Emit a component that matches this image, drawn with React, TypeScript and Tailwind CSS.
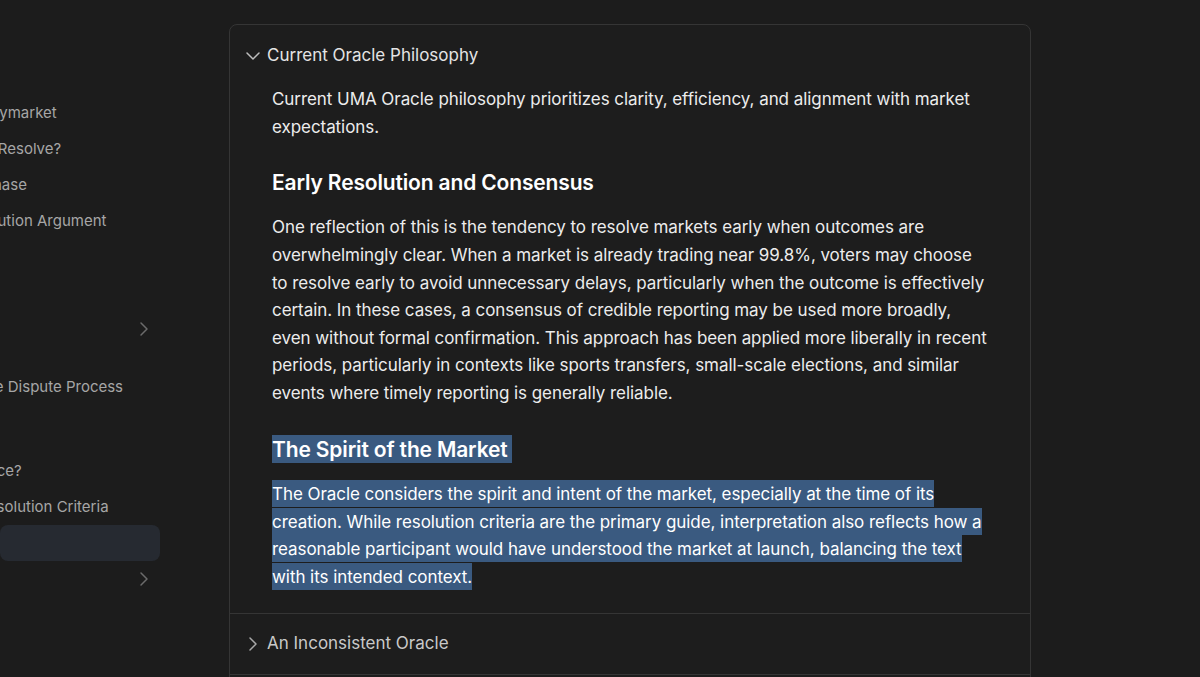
import React from "react";
import { ChevronDown, ChevronRight } from "lucide-react";

type NavItem = {
  label: string;
  shift: string;
  chevron?: boolean;
  active?: boolean;
  gap?: string;
};

const nav: NavItem[] = [
  { label: "Trading on Polymarket", shift: "-ml-[103px]" },
  { label: "How Do Markets Resolve?", shift: "-ml-[124px]" },
  { label: "Proposal Phase", shift: "-ml-[83px]" },
  { label: "Making a Resolution Argument", shift: "-ml-[110px]" },
  { label: "Guides", shift: "-ml-[50px]", chevron: true, gap: "mt-[72px]" },
  { label: "Navigating the Dispute Process", shift: "-ml-[99px]", gap: "mt-[22px]" },
  { label: "What is Precedence?", shift: "-ml-[128px]", gap: "mt-[48px]" },
  { label: "Interpreting Resolution Criteria", shift: "-ml-[108px]" },
  { label: "Philosophy", shift: "-ml-[120px]", active: true },
  { label: "Reference", shift: "-ml-[120px]", chevron: true },
];

function Sidebar() {
  return (
    <aside className="w-[160px] shrink-0 overflow-hidden pt-[95px] text-[15px] text-[#a6a6a6]">
      {nav.map((item) => (
        <div
          key={item.label}
          className={`flex h-9 items-center justify-between rounded-lg pr-1 ${item.gap ?? ""} ${
            item.active ? "bg-[#262a31]" : ""
          }`}
        >
          <span className={`shrink-0 whitespace-nowrap ${item.shift}`}>{item.label}</span>
          {item.chevron && <ChevronRight className="size-6 shrink-0 text-[#6b6b6b]" strokeWidth={1.5} />}
        </div>
      ))}
    </aside>
  );
}

function Mark({ children }: { children: React.ReactNode }) {
  return <span className="bg-[#3a5a80] py-[3.5px] text-white">{children}</span>;
}

export default function App() {
  return (
    <div
      className="flex h-[677px] w-[1200px] overflow-hidden bg-[#1c1c1c] antialiased"
      style={{ fontFamily: "Inter, 'Noto Sans', sans-serif" }}
    >
      <Sidebar />
      <main className="pl-[69px] pt-6">
        <div className="w-[802px] rounded-lg border border-[#353535] bg-[#1d1d1d]">
          <section>
            <button className="flex h-[61px] w-full items-center gap-[2px] pl-[11px] text-[17px] text-[#e4e4e4]">
              <ChevronDown className="size-6 text-[#bdbdbd]" strokeWidth={1.5} />
              Current Oracle Philosophy
            </button>
            <div className="px-[42px] pb-[22px] text-[17px] leading-relaxed tracking-[-0.06px] text-[#ececec]">
              <p>
                Current UMA Oracle philosophy prioritizes clarity, efficiency, and alignment with market
                expectations.
              </p>
              <h3 className="mt-[28px] text-[21px] font-semibold leading-[28px] tracking-[-0.15px] text-white">
                Early Resolution and Consensus
              </h3>
              <p className="mt-[17px]">
                One reflection of this is the tendency to resolve markets early when outcomes are
                overwhelmingly clear. When a market is already trading near 99.8%, voters may choose to
                resolve early to avoid unnecessary delays, particularly when the outcome is effectively
                certain. In these cases, a consensus of credible reporting may be used more broadly, even
                without formal confirmation. This approach has been applied more liberally in recent
                periods, particularly in contexts like sports transfers, small-scale elections, and similar
                events where timely reporting is generally reliable.
              </p>
              <h3 className="mt-[28px] text-[21px] font-semibold leading-[28px] tracking-[-0.15px] text-white">
                <span className="bg-[#3a5a80] py-[1.5px] pr-1">The Spirit of the Market</span>
              </h3>
              <p className="mt-[17px]">
                <Mark>
                  The Oracle considers the spirit and intent of the market, especially at the time of its
                  creation. While resolution criteria are the primary guide, interpretation also reflects how
                  a reasonable participant would have understood the market at launch, balancing the text
                  with its intended context.
                </Mark>
              </p>
            </div>
          </section>
          <section className="border-t border-[#353535]">
            <button className="flex h-[60px] w-full items-center gap-[2px] pl-[11px] text-[17px] text-[#c9c9c9]">
              <ChevronRight className="size-6 text-[#a8a8a8]" strokeWidth={1.5} />
              An Inconsistent Oracle
            </button>
          </section>
          <section className="border-t border-[#353535]">
            <button className="flex h-[60px] w-full items-center gap-[2px] pl-[11px] text-[17px] text-[#c9c9c9]">
              <ChevronRight className="size-6 text-[#a8a8a8]" strokeWidth={1.5} />
              Historical Context
            </button>
          </section>
        </div>
      </main>
    </div>
  );
}
